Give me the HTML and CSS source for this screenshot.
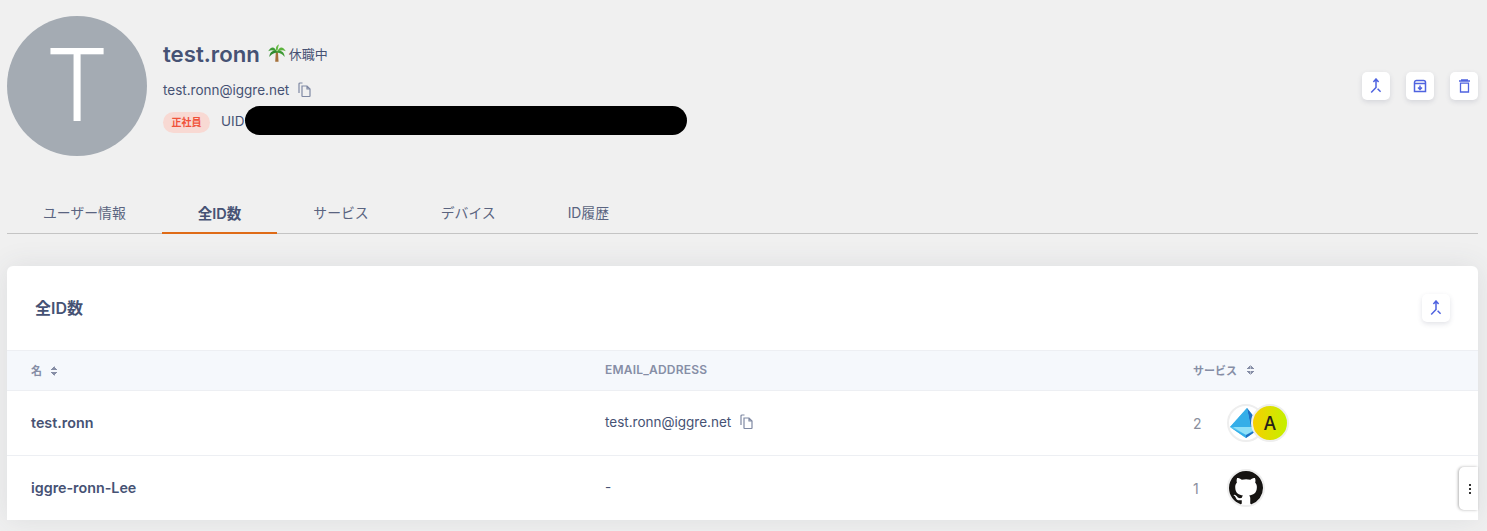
FILE: index.html
```html
<!DOCTYPE html>
<html>
	<head>
		<meta charset="UTF-8">
		<title>test.ronn</title>
		<link rel="stylesheet" href="styles.css">
	</head>
	<body>
		<div class="profile">
			<div class="avatar">T</div>
			<div class="info">
				<div class="name-row">
					<span class="name">test.ronn</span>
					<svg class="palm" viewBox="0 0 16 16">
						<path d="M7 6.500 L6.400 15.800 L9.400 15.800 L8.800 6.500 Z" fill="#a5703a"/>
						<path d="M8 7.500 C6 1.500 2.500 2 .2 6.500 C3 4.800 5 5.200 8 7.500 Z" fill="#3f9b35"/>
						<path d="M8 7.500 C10 1.500 13.500 2 15.800 6.500 C13 4.800 11 5.200 8 7.500 Z" fill="#5cb33c"/>
						<path d="M8 6.500 C4.500 5 1.500 7 1.200 11.500 C3.200 8.800 5.400 7.800 8 7.500 Z" fill="#2f8a2e"/>
						<path d="M8 6.500 C11.500 5 14.500 7 14.800 11.500 C12.800 8.800 10.600 7.800 8 7.500 Z" fill="#3f9b35"/>
						<path d="M8 7 C6 3.600 7.500 1 9.800 .4 C8.800 2.600 9 4.600 8 7 Z" fill="#66bb44"/>
					</svg>
					<span class="status">休職中</span>
				</div>
				<div class="mail-row">
					<span>test.ronn@iggre.net</span>
					<svg class="copy" viewBox="0 0 16 16"><path d="M5.500 1.500H3a1 1 0 0 0-1 1v9M5 4.500h5l3 3v7a.5.5 0 0 1-.5.5H5.500A.5.5 0 0 1 5 14.500Z M10 4.500v3h3" transform="translate(0 -.5)"/></svg>
				</div>
				<div class="uid-row">
					<span class="badge">正社員</span>
					<span class="uid">UID</span>
					<span class="mask"></span>
				</div>
			</div>
			<div class="actions">
				<button class="icon-btn" type="button">
					<svg viewBox="0 0 16 16"><path d="M8 1V10M5.400 4 8 1l2.600 3M8 9.500l-4.800 5M9.600 10.800l3 3"/></svg>
				</button>
				<button class="icon-btn" type="button">
					<svg viewBox="0 0 16 16"><path d="M2.500 4.500a2 2 0 0 1 2-2h7a2 2 0 0 1 2 2v9h-11ZM2.500 5.500h11M8 7.500v3.500M6 9.500l2 2 2-2"/></svg>
				</button>
				<button class="icon-btn trash" type="button">
					<svg viewBox="0 0 16 16"><path d="M5 1.800h7M3 3h11M4.500 5.200h8v8.800h-8Z"/></svg>
				</button>
			</div>
		</div>

		<ul class="tabs">
			<li>ユーザー情報</li>
			<li class="active">全ID数</li>
			<li>サービス</li>
			<li>デバイス</li>
			<li>ID履歴</li>
		</ul>

		<div class="card">
			<div class="card-head">
				<h2>全ID数</h2>
				<button class="icon-btn" type="button">
					<svg viewBox="0 0 16 16"><path d="M8 1V10M5.400 4 8 1l2.600 3M8 9.500l-4.800 5M9.600 10.800l3 3"/></svg>
				</button>
			</div>
			<div class="row row-head">
				<div class="col-name">名 <span class="sort"></span></div>
				<div class="col-mail">EMAIL_ADDRESS</div>
				<div class="col-service">サービス <span class="sort"></span></div>
			</div>
			<div class="row">
				<div class="col-name strong">test.ronn</div>
				<div class="col-mail">
					test.ronn@iggre.net
					<svg class="copy copy-row" viewBox="0 0 16 16"><path d="M5.500 1.500H3a1 1 0 0 0-1 1v9M5 4.500h5l3 3v7a.5.5 0 0 1-.5.5H5.500A.5.5 0 0 1 5 14.500Z M10 4.500v3h3" transform="translate(0 -.5)"/></svg>
				</div>
				<div class="col-service">
					<span class="count">2</span>
					<span class="logo">
						<svg class="logo-gem" viewBox="0 0 34 34">
							<path d="M18 2 L33 21 L17 32 L1 21 Z" fill="#5cc8f2"/>
							<path d="M18 2 L33 21 L22 22 Z" fill="#1f6fc4"/>
							<path d="M18 2 L22 22 L9 22 L1 21 Z" fill="#35aee8"/>
							<path d="M4 21 L22 21 L28 22 L17 29 Z" fill="#8fe0f8"/>
							<path d="M1 21 L17 29 L17 32 Z" fill="#35aee8"/>
							<path d="M17 29 L33 21 L17 32 Z" fill="#1f6fc4"/>
						</svg>
					</span>
					<span class="logo logo-a">A</span>
				</div>
			</div>
			<div class="row">
				<div class="col-name strong">iggre-ronn-Lee</div>
				<div class="col-mail">-</div>
				<div class="col-service">
					<span class="count">1</span>
					<span class="logo logo-git">
						<svg viewBox="0 0 16 16"><path fill="#161412" d="M8 0C3.580 0 0 3.580 0 8c0 3.540 2.290 6.530 5.470 7.590.4.070.550-.170.550-.380 0-.190-.010-.820-.010-1.490-2.010.370-2.530-.490-2.690-.940-.090-.230-.480-.940-.820-1.130-.280-.150-.680-.520-.010-.530.630-.010 1.080.580 1.230.820.720 1.210 1.870.870 2.330.660.070-.520.280-.870.510-1.070-1.780-.200-3.640-.890-3.640-3.950 0-.870.310-1.590.820-2.150-.080-.200-.360-1.020.080-2.120 0 0 .670-.210 2.200.820.640-.180 1.320-.270 2-.270.680 0 1.360.090 2 .270 1.530-1.040 2.200-.820 2.200-.820.440 1.100.160 1.920.080 2.120.510.560.820 1.270.820 2.150 0 3.070-1.870 3.750-3.650 3.950.290.250.540.730.540 1.480 0 1.070-.010 1.930-.010 2.200 0 .210.150.460.550.380A8.013 8.013 0 0 0 16 8c0-4.420-3.580-8-8-8z"/></svg>
					</span>
				</div>
				<div class="side-tab"><i></i><i></i><i></i></div>
			</div>
		</div>
	</body>
</html>
```
FILE: styles.css
```css
*{
	margin: 0;
	padding: 0;
	box-sizing: border-box;
}
html, body{
	height: 531px;
	overflow: hidden;
}
body{
	padding: 16px 9px 0 7px;
	background-color: #f0f0f0;
	color: #465274;
	font-family: Inter, "Noto Sans CJK JP", sans-serif;
	font-size: 13.5px;
}

/* profile header */
.profile{
	display: flex;
	height: 140px;
}
.avatar{
	width: 140px;
	height: 140px;
	flex: none;
	border-radius: 50%;
	background-color: #a4abb3;
	color: #fff;
	font-size: 100px;
	font-weight: 300;
	line-height: 137px;
	text-align: center;
}
.info{
	margin-left: 16px;
	padding-top: 24px;
	flex: 1;
}
.name-row{
	display: flex;
	align-items: center;
	height: 26px;
}
.name{
	font-size: 22.200px;
	font-weight: 600;
}
.palm{
	width: 18px;
	height: 18px;
	margin-left: 8px;
}
.status{
	margin-left: 3px;
	font-size: 13px;
}
.mail-row{
	display: flex;
	align-items: center;
	height: 18px;
	margin-top: 15px;
}
.copy{
	width: 16px;
	height: 16px;
	margin-left: 8px;
	fill: none;
	stroke: #7f89a3;
	stroke-width: 1.2;
	vertical-align: -3px;
}
.copy-row{
	margin-left: 4px;
}
.uid-row{
	display: flex;
	align-items: center;
	height: 29px;
	margin-top: 7px;
}
.badge{
	width: 47px;
	height: 21px;
	margin-top: 3px;
	border-radius: 11px;
	background-color: #f8d9d3;
	color: #f0523a;
	font-size: 10px;
	font-weight: 600;
	line-height: 21px;
	text-align: center;
}
.uid{
	margin-left: 11px;
	width: 24px;
}
.mask{
	width: 442px;
	height: 29px;
	border-radius: 15px;
	background-color: #000;
}
.actions{
	display: flex;
	gap: 16px;
	padding-top: 56px;
}
.icon-btn{
	display: flex;
	align-items: center;
	justify-content: center;
	width: 28px;
	height: 28px;
	border: 0;
	border-radius: 5px;
	background-color: #fff;
	box-shadow: 0 2px 5px rgba(60, 70, 100, 0.15);
}
.icon-btn svg{
	width: 16px;
	height: 16px;
	fill: none;
	stroke: #4f63e0;
	stroke-width: 1.500;
}
.trash svg{
	stroke-width: 1.300;
}

/* tabs */
.tabs{
	display: flex;
	height: 40px;
	margin-top: 38px;
	border-bottom: 1px solid #c4c4c4;
	list-style: none;
	color: #5a6480;
	font-size: 13.850px;
}
.tabs li{
	height: 40px;
	padding: 0 36px;
	line-height: 39px;
}
.tabs .active{
	border-bottom: 2px solid #df6b17;
	color: #465274;
	font-size: 14.500px;
	font-weight: 600;
}

/* card */
.card{
	height: 254px;
	margin-top: 32px;
	border-radius: 6px 6px 0 0;
	background-color: #fff;
	box-shadow: 0 0 28px rgba(60, 70, 90, 0.1);
}
.card-head{
	display: flex;
	align-items: center;
	justify-content: space-between;
	height: 84px;
	padding: 0 28px;
}
.card-head h2{
	padding-bottom: 2px;
	font-size: 16px;
	font-weight: 600;
}
.row{
	position: relative;
	display: flex;
	align-items: center;
	height: 65px;
	border-top: 1px solid #edeff3;
}
.row-head{
	height: 41px;
	border-bottom: 1px solid #edeff3;
	background-color: #f5f8fc;
	color: #868ea6;
	font-size: 11px;
	font-weight: 600;
}
.row-head + .row{
	height: 64px;
	border-top: 0;
}
.row-head .col-mail{
	font-size: 12px;
	letter-spacing: .2px;
}
.col-name{
	width: 598px;
	padding: 0 0 2px 24px;
}
.col-mail{
	width: 588px;
	padding-bottom: 2px;
}
.col-service{
	display: flex;
	align-items: center;
}
.row-head .col-service{
	gap: 4px;
	padding-bottom: 2px;
}
.strong{
	font-size: 14.300px;
	font-weight: 600;
}
.sort{
	display: inline-block;
	width: 7px;
	height: 10px;
	margin-left: 6px;
	vertical-align: -1px;
	background:
		linear-gradient(to top left, #868ea6 50%, transparent 50%) left 0/50% 4px no-repeat,
		linear-gradient(to top right, #868ea6 50%, transparent 50%) right 0/50% 4px no-repeat,
		linear-gradient(to bottom left, #868ea6 50%, transparent 50%) left 6px/50% 4px no-repeat,
		linear-gradient(to bottom right, #868ea6 50%, transparent 50%) right 6px/50% 4px no-repeat;
}
.count{
	width: 34px;
	color: #8a8f9d;
	font-size: 14px;
}
.logo{
	display: flex;
	align-items: center;
	justify-content: center;
	width: 38px;
	height: 38px;
	border: 2px solid #eeeeee;
	border-radius: 50%;
	background-color: #fff;
}
.logo svg{
	width: 34px;
	height: 34px;
}
.logo-a{
	margin-left: -14px;
	background: linear-gradient(90deg, #f7cf00, #c4f000);
	color: #26221a;
	font-size: 18px;
	font-weight: 500;
}
.side-tab{
	position: absolute;
	right: 0;
	top: 11px;
	display: flex;
	flex-direction: column;
	align-items: center;
	justify-content: center;
	gap: 2px;
	width: 19px;
	height: 43px;
	padding-left: 2px;
	border-radius: 5px 0 0 5px;
	background-color: #fff;
	box-shadow: -1px 0 3px rgba(0, 0, 0, 0.3);
}
.side-tab i{
	width: 2px;
	height: 2px;
	background-color: #333;
}
```
